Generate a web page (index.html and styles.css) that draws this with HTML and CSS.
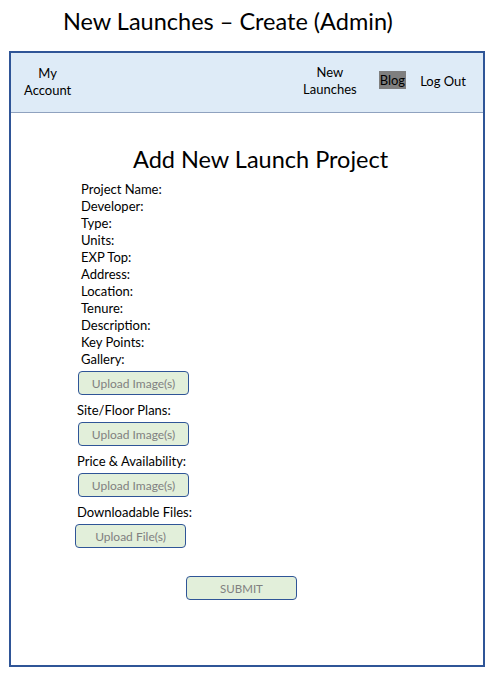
FILE: index.html
```html
<!DOCTYPE html>
<html>
<head>
<meta charset="utf-8">
<link rel="stylesheet" href="styles.css">
</head>
<body>
<h1 class="page-title">New Launches – Create (Admin)</h1>
<div class="frame">
  <nav class="nav">
    <div class="nav-item nav-account">My<br>Account</div>
    <div class="nav-right">
      <div class="nav-item nav-launches">New<br>Launches</div>
      <div class="nav-item nav-blog">Blog</div>
      <div class="nav-item nav-logout">Log Out</div>
    </div>
  </nav>
  <main class="content">
    <h2 class="form-title">Add New Launch Project</h2>
    <ul class="fields">
      <li>Project Name:</li>
      <li>Developer:</li>
      <li>Type:</li>
      <li>Units:</li>
      <li>EXP Top:</li>
      <li>Address:</li>
      <li>Location:</li>
      <li>Tenure:</li>
      <li>Description:</li>
      <li>Key Points:</li>
      <li>Gallery:</li>
    </ul>
    <div class="upload-group first">
      <button class="btn">Upload Image(s)</button>
    </div>
    <div class="upload-group">
      <div class="group-label">Site/Floor Plans:</div>
      <button class="btn">Upload Image(s)</button>
    </div>
    <div class="upload-group">
      <div class="group-label">Price &amp; Availability:</div>
      <button class="btn">Upload Image(s)</button>
    </div>
    <div class="upload-group files">
      <div class="group-label">Downloadable Files:</div>
      <button class="btn">Upload File(s)</button>
    </div>
    <div class="submit-row">
      <button class="btn btn-submit">SUBMIT</button>
    </div>
  </main>
</div>
</body>
</html>
```
FILE: styles.css
```css
* { box-sizing: border-box; }
html, body { margin: 0; padding: 0; background: #ffffff; }
body {
  font-family: Lato, "Open Sans", sans-serif;
  color: #000;
  width: 493px;
  height: 676px;
  overflow: hidden;
}
.page-title {
  margin: 0;
  padding: 6px 0 0 63px;
  height: 51px;
  font-size: 23.5px;
  font-weight: 400;
  line-height: 30px;
}
.frame {
  margin-left: 9px;
  width: 476px;
  height: 616px;
  border: 2px solid #2F5597;
  display: flex;
  flex-direction: column;
}
.nav {
  height: 60px;
  background: #DEEBF7;
  border-bottom: 1px solid #8FA2BF;
  display: flex;
  align-items: center;
  font-size: 13px;
  line-height: 17px;
}
.nav-item { text-align: center; }
.nav-account { margin-left: 13px; margin-top: -2px; }
.nav-right {
  margin-left: auto;
  display: flex;
  align-items: center;
}
.nav-launches { margin-top: -3px; }
.nav-blog {
  margin-left: 22px;
  background: #7F7F7F;
  padding: 1px 1px;
  line-height: 16px;
  margin-top: -5px;
}
.nav-logout { margin-left: 14px; margin-right: 17px; margin-top: -2px; }
.content {
  display: flex;
  flex-direction: column;
  padding-left: 66px;
}
.form-title {
  margin: 32px 0 0 56px;
  font-size: 23.5px;
  font-weight: 400;
  line-height: 28px;
}
.fields {
  list-style: none;
  margin: 8px 0 0 4px;
  padding: 0;
  font-size: 13px;
  line-height: 17px;
}
.upload-group {
  display: flex;
  flex-direction: column;
  align-items: flex-start;
  font-size: 13px;
  line-height: 17px;
}
.upload-group.first { margin-top: 3px; }
.group-label { margin-top: 7px; margin-bottom: 3px; }
.upload-group.files .btn { margin-left: -2px; }
.btn {
  width: 111px;
  height: 24px;
  padding: 0;
  margin: 0 0 0 1px;
  border: 1px solid #2F5597;
  border-radius: 4px;
  background: #E2EFDA;
  color: #808080;
  font-family: Lato, "Open Sans", sans-serif;
  font-size: 12px;
  text-align: center;
}
.submit-row {
  display: flex;
  margin-top: 28px;
  padding-left: 108px;
}
.btn-submit { font-size: 11.5px; }
```
